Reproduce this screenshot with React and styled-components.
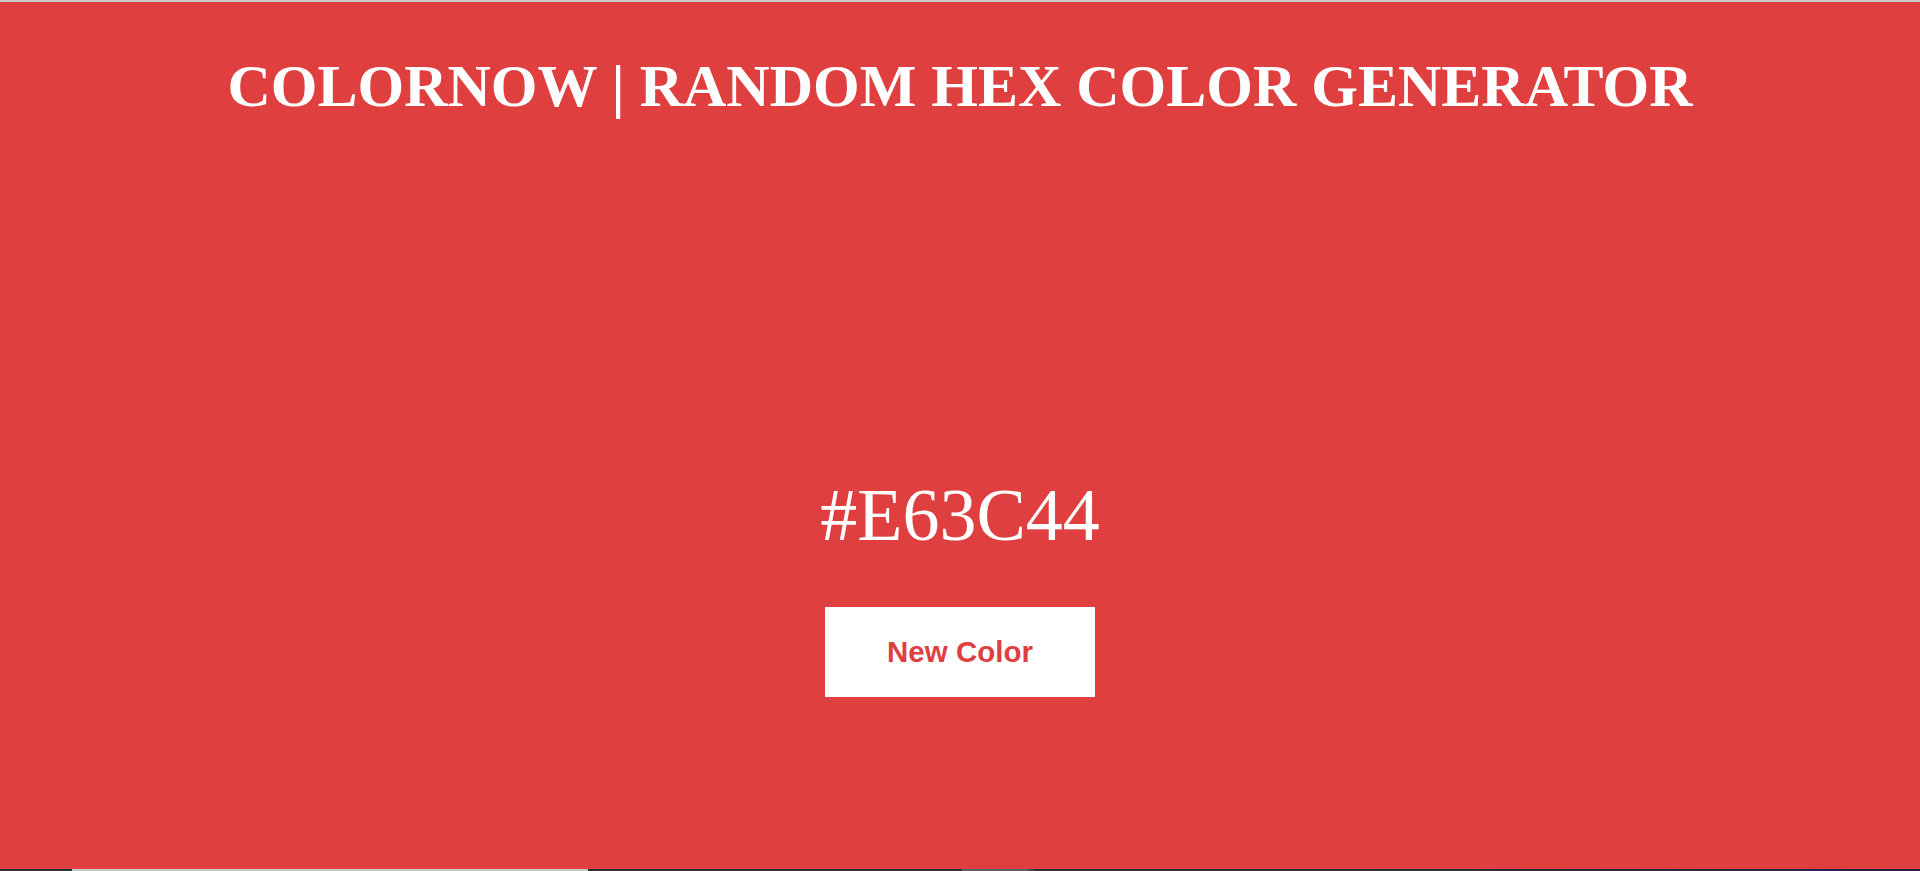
import React, { useState } from 'react';
import styled, { createGlobalStyle } from 'styled-components';

const GlobalStyle = createGlobalStyle`
    html, body {
        margin:0;
        padding:0;
        background:#c9c9c9;
    }
    #root {
        height:871px;
        display:flex;
        flex-direction:column;
    }
`;

const TopEdge = styled.div`
    height:2px;
    background:#c9c9c9;
`;

const Main = styled.div`
    flex:1;
    background:${props => props.color};
    display:flex;
    flex-direction:column;
    align-items:center;
    padding-top:50px;
    box-sizing:border-box;
`;

const Title = styled.h1`
    margin:0;
    font-family:"Liberation Serif", "Times New Roman", serif;
    font-weight:700;
    font-size:60px;
    color:#fff;
    text-align:center;
`;

const HexCode = styled.div`
    margin-top:352px;
    font-family:"Liberation Serif", "Times New Roman", serif;
    font-size:74px;
    color:#fff;
`;

const NewButton = styled.button`
    margin-top:49px;
    width:270px;
    height:90px;
    border:none;
    border-radius:0;
    background:#fff;
    color:${props => props.color};
    font-family:"Liberation Sans", Arial, sans-serif;
    font-weight:700;
    font-size:29.5px;
    cursor:pointer;
`;

const BottomEdge = styled.div`
    height:2px;
    display:flex;
    background:linear-gradient(90deg, #22363e 0%, #22363e 70%, #1d2148 100%);
`;

const EdgePiece = styled.div`
    height:100%;
    width:${props => props.w}px;
    background:${props => props.bg || 'transparent'};
`;

export default function App() {
    const [color, setColor] = useState('#df403f');
    const [hex, setHex] = useState('#E63C44');

    const randomColor = () => {
        const next = '#' + Math.floor(Math.random() * 0xffffff).toString(16).padStart(6, '0').toUpperCase();
        setHex(next);
        setColor(next);
    };

    return (
        <>
            <GlobalStyle />
            <TopEdge />
            <Main color={color}>
                <Title>COLORNOW | RANDOM HEX COLOR GENERATOR</Title>
                <HexCode>{hex}</HexCode>
                <NewButton color={color} onClick={randomColor}>New Color</NewButton>
            </Main>
            <BottomEdge>
                <EdgePiece w={72} />
                <EdgePiece w={516} bg="#c6c6c6" />
                <EdgePiece w={374} />
                <EdgePiece w={66} bg="#56646c" />
                <EdgePiece w={7} bg="#3c4a52" />
            </BottomEdge>
        </>
    );
}
